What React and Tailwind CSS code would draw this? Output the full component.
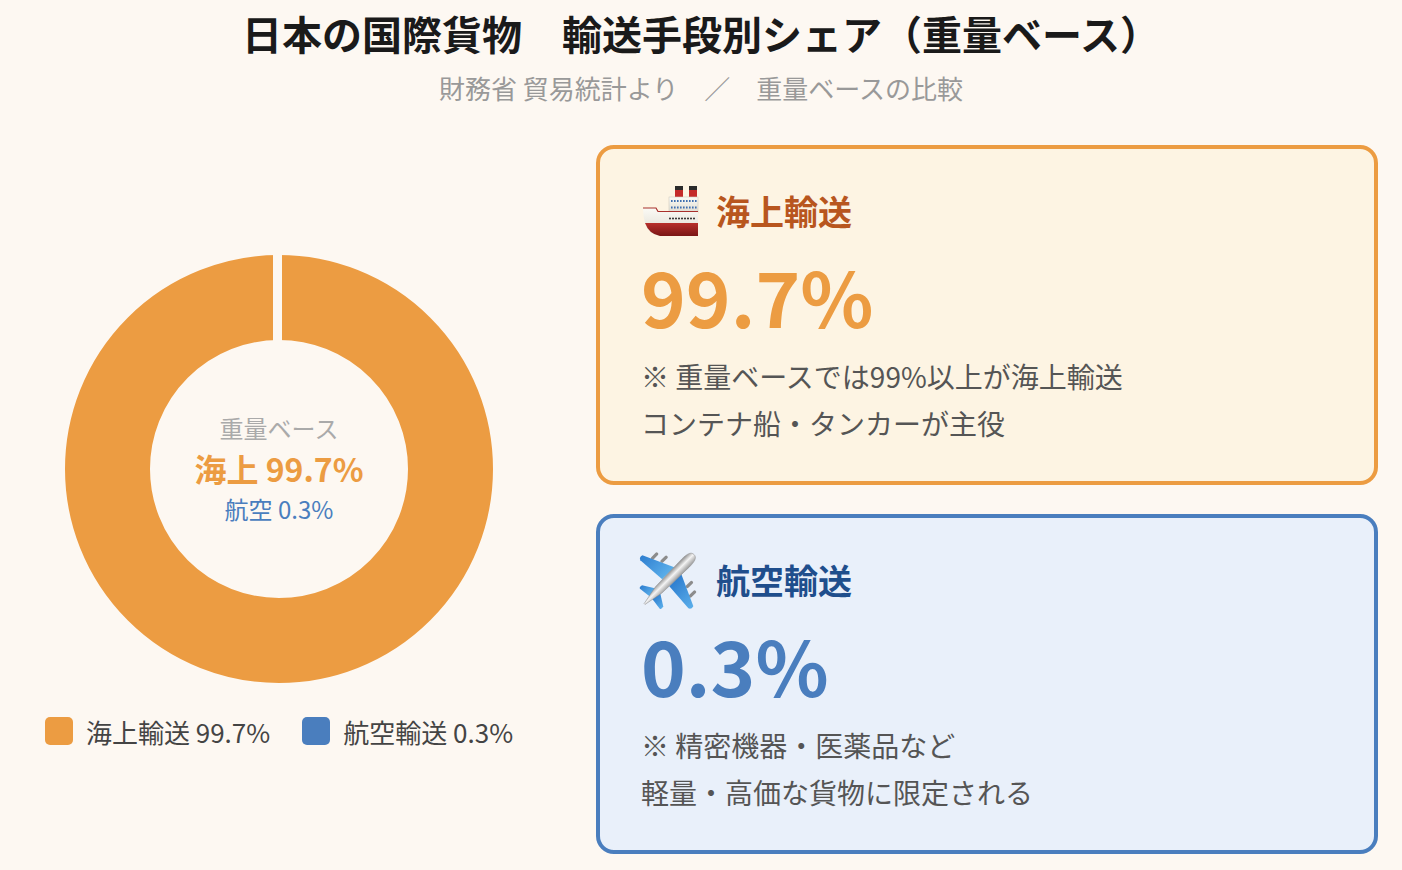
import React from "react";

const font = { fontFamily: "'Noto Sans CJK JP', 'Noto Sans', sans-serif" };

function ShipIcon() {
  return (
    <svg width="66" height="66" viewBox="0 0 66 66">
      <defs>
        <linearGradient id="hull" x1="0" y1="0" x2="0" y2="1">
          <stop offset="0" stopColor="#b8302c" />
          <stop offset="1" stopColor="#7a1616" />
        </linearGradient>
        <linearGradient id="deck" x1="0" y1="0" x2="0" y2="1">
          <stop offset="0" stopColor="#fbfaf5" />
          <stop offset="1" stopColor="#dedbd0" />
        </linearGradient>
      </defs>
      {/* funnels */}
      <rect x="39" y="8" width="8" height="12" fill="#c42a2a" />
      <rect x="39" y="8" width="8" height="4" fill="#2a2a2a" />
      <rect x="53" y="8" width="8" height="12" fill="#c42a2a" />
      <rect x="53" y="8" width="8" height="4" fill="#2a2a2a" />
      {/* superstructure */}
      <rect x="33" y="19" width="29" height="16" fill="url(#deck)" stroke="#cfcbc0" strokeWidth="0.6" />
      {[35, 38, 41, 44, 47, 50, 53, 56, 59].map((x) => (
        <rect key={"a" + x} x={x} y="22" width="1.6" height="2" fill="#3f6fb0" />
      ))}
      {[35, 38, 41, 44, 47, 50, 53, 56, 59].map((x) => (
        <rect key={"b" + x} x={x} y="28.5" width="1.6" height="2" fill="#3f6fb0" />
      ))}
      {/* hull */}
      <path d="M7 30 L20 30 L22 33 L62 33 L62 58 L24 58 Q12 56 9 45 Q7 38 7 30 Z" fill="url(#deck)" />
      <path d="M9 45 L62 45 L62 58 L24 58 Q13 56 9 45 Z" fill="url(#hull)" />
      <path d="M7 30 L20 30 L22 33.5 L62 33.5" fill="none" stroke="#a8302c" strokeWidth="1.2" />
      {[34, 37, 40, 43, 46, 49, 52, 55, 58].map((x) => (
        <circle key={"p" + x} cx={x} cy="40.5" r="0.95" fill="#222" />
      ))}
    </svg>
  );
}

function PlaneIcon() {
  return (
    <svg width="66" height="66" viewBox="0 0 66 66">
      <defs>
        <linearGradient id="wing" x1="0" y1="0" x2="1" y2="0">
          <stop offset="0" stopColor="#2f7fd0" />
          <stop offset="1" stopColor="#5aaeea" />
        </linearGradient>
        <linearGradient id="body" x1="0" y1="0" x2="1" y2="0">
          <stop offset="0" stopColor="#8f8f8f" />
          <stop offset="0.45" stopColor="#f4f4f4" />
          <stop offset="1" stopColor="#9a9a9a" />
        </linearGradient>
      </defs>
      <g transform="rotate(45 34 33)">
        {/* engines */}
        <rect x="13.5" y="18" width="3.2" height="9" rx="1.4" fill="#8c8c8c" />
        <rect x="4.6" y="22.5" width="3.2" height="9" rx="1.4" fill="#8c8c8c" />
        <rect x="49.3" y="18" width="3.2" height="9" rx="1.4" fill="#8c8c8c" />
        <rect x="58.2" y="22.5" width="3.2" height="9" rx="1.4" fill="#8c8c8c" />
        {/* main wings */}
        <path d="M28 21 L-3 35 Q-4 39 -1 40 L28 38 Z" fill="url(#wing)" />
        <path d="M38 21 L69 35 Q70 39 67 40 L38 38 Z" fill="url(#wing)" />
        {/* tail wings */}
        <path d="M30 49 L18 56.5 Q17 60 19 60.5 L31 59 Z" fill="url(#wing)" />
        <path d="M36 49 L48 56.5 Q49 60 47 60.5 L35 59 Z" fill="url(#wing)" />
        {/* fuselage */}
        <path d="M33 -2 C37.5 -2 38.5 3 38.5 10 L37.5 48 L33.6 68 L32.4 68 L28.5 48 L27.5 10 C27.5 3 28.5 -2 33 -2 Z" fill="url(#body)" stroke="#8a8a8a" strokeWidth="0.5" />
      </g>
    </svg>
  );
}

function Donut() {
  return (
    <div className="relative h-[430px] w-[430px]">
      <svg width="430" height="430" viewBox="-215 -215 430 430">
        <circle cx="0" cy="0" r="171.5" fill="none" stroke="#ec9c42" strokeWidth="85" />
        <rect x="-6" y="-216" width="9" height="90" fill="#fdf8f2" />
      </svg>
      <div className="absolute inset-0 flex flex-col items-center justify-center">
        <div className="text-[24px] leading-[40px] text-[#aaaaaa]">重量ベース</div>
        <div className="text-[32px] font-bold leading-[40px] text-[#ec9c42]">海上 99.7%</div>
        <div className="text-[24px] leading-[42px] text-[#4a7ebe]">航空 0.3%</div>
      </div>
    </div>
  );
}

function Card({ icon, title, value, lines, box, titleColor, valueColor }) {
  return (
    <div className={`h-[340px] rounded-[18px] border-4 px-[41px] pt-[34px] ${box}`}>
      <div className="flex h-[56px] items-center gap-[14px]">
        <div className="-ml-[5px] flex h-[66px] w-[66px] items-center justify-center">{icon}</div>
        <h2 className={`text-[34px] font-bold leading-none ${titleColor}`}>{title}</h2>
      </div>
      <div className={`mt-[18px] text-[76px] font-bold leading-none ${valueColor}`}>{value}</div>
      <div className="mt-[20px] text-[28px] leading-[47px] text-[#555555]">
        {lines.map((l) => (
          <p key={l}>{l}</p>
        ))}
      </div>
    </div>
  );
}

export default function App() {
  return (
    <div className="min-h-screen bg-[#fdf8f2] px-6" style={font}>
      <h1 className="pt-[9px] text-center text-[40px] font-bold leading-[48px] text-[#1a1a1a]">
        日本の国際貨物　輸送手段別シェア（重量ベース）
      </h1>
      <p className="mt-[16px] text-center text-[26px] leading-[30px] text-[#999999]">
        財務省 貿易統計より　／　重量ベースの比較
      </p>

      <div className="mt-[42px] flex gap-[62px]">
        <div className="flex w-[510px] flex-col items-center justify-center pt-[5px]">
          <Donut />
          <div className="mt-[28px] flex items-center gap-[32px] text-[26px] text-[#444444]">
            <div className="flex items-center gap-[13px]">
              <span className="h-[28px] w-[28px] rounded-[5px] bg-[#ec9c42]" />
              <span>海上輸送 99.7%</span>
            </div>
            <div className="flex items-center gap-[13px]">
              <span className="h-[28px] w-[28px] rounded-[5px] bg-[#4a7ebe]" />
              <span>航空輸送 0.3%</span>
            </div>
          </div>
        </div>

        <div className="flex flex-1 flex-col gap-[29px]">
          <Card
            icon={<ShipIcon />}
            title="海上輸送"
            value="99.7%"
            lines={["※ 重量ベースでは99%以上が海上輸送", "コンテナ船・タンカーが主役"]}
            box="border-[#ec9c42] bg-[#fdf4e3]"
            titleColor="text-[#b8561e]"
            valueColor="text-[#ec9c42]"
          />
          <Card
            icon={<PlaneIcon />}
            title="航空輸送"
            value="0.3%"
            lines={["※ 精密機器・医薬品など", "軽量・高価な貨物に限定される"]}
            box="border-[#4a7ebe] bg-[#e9f0fa]"
            titleColor="text-[#1f4e8c]"
            valueColor="text-[#4a7ebe]"
          />
        </div>
      </div>
    </div>
  );
}
